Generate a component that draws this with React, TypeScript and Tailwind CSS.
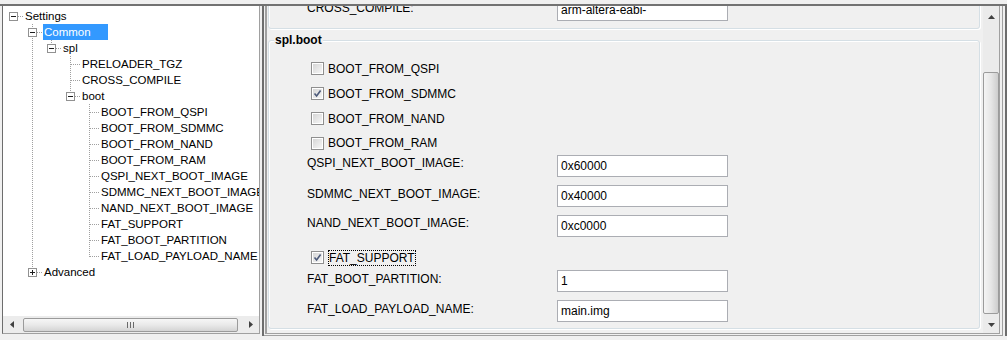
import React from "react";

type CellKind = "blank" | "pipe" | "tee" | "elbow" | "root";
type Box = "minus" | "plus" | undefined;

type TreeRow = { label: string; cells: CellKind[]; box?: Box; selected?: boolean };

const leaf = (label: string, last = false): TreeRow => ({
  label,
  cells: ["blank", "pipe", "blank", "blank", last ? "elbow" : "tee"],
});

const TREE: TreeRow[] = [
  { label: "Settings", cells: ["root"], box: "minus" },
  { label: "Common", cells: ["blank", "tee"], box: "minus", selected: true },
  { label: "spl", cells: ["blank", "pipe", "elbow"], box: "minus" },
  { label: "PRELOADER_TGZ", cells: ["blank", "pipe", "blank", "tee"] },
  { label: "CROSS_COMPILE", cells: ["blank", "pipe", "blank", "tee"] },
  { label: "boot", cells: ["blank", "pipe", "blank", "elbow"], box: "minus" },
  leaf("BOOT_FROM_QSPI"),
  leaf("BOOT_FROM_SDMMC"),
  leaf("BOOT_FROM_NAND"),
  leaf("BOOT_FROM_RAM"),
  leaf("QSPI_NEXT_BOOT_IMAGE"),
  leaf("SDMMC_NEXT_BOOT_IMAGE"),
  leaf("NAND_NEXT_BOOT_IMAGE"),
  leaf("FAT_SUPPORT"),
  leaf("FAT_BOOT_PARTITION"),
  leaf("FAT_LOAD_PAYLOAD_NAME", true),
  { label: "Advanced", cells: ["blank", "elbow"], box: "plus" },
];

const dots = { stroke: "#a0a0a0", strokeDasharray: "1 1", shapeRendering: "crispEdges" as const };

const TreeCell = ({ kind, box }: { kind: CellKind; box?: Box }) => (
  <svg width="19" height="16" className="shrink-0">
    {kind === "pipe" || kind === "tee" ? <line x1="9.5" y1="0" x2="9.5" y2="16" {...dots} /> : null}
    {kind === "elbow" ? <line x1="9.5" y1="0" x2="9.5" y2="9" {...dots} /> : null}
    {kind === "tee" || kind === "elbow" || kind === "root" ? (
      <line x1="10" y1="8.5" x2="19" y2="8.5" {...dots} />
    ) : null}
    {box ? (
      <g shapeRendering="crispEdges">
        <rect x="5.5" y="4.5" width="8" height="8" fill="#ffffff" stroke="#919191" />
        <line x1="7" y1="8.5" x2="12" y2="8.5" stroke="#1e1e1e" />
        {box === "plus" ? <line x1="9.5" y1="6" x2="9.5" y2="11" stroke="#1e1e1e" /> : null}
      </g>
    ) : null}
  </svg>
);

const Arrow = ({ dir }: { dir: "up" | "down" | "left" | "right" }) => {
  const pts = {
    up: "3.5,0 7,4 0,4",
    down: "0,0 7,0 3.5,4",
    left: "4,0 4,7 0,3.5",
    right: "0,0 4,3.5 0,7",
  }[dir];
  const vertical = dir === "up" || dir === "down";
  return (
    <svg width={vertical ? 7 : 4} height={vertical ? 4 : 7}>
      <polygon points={pts} fill="#404040" />
    </svg>
  );
};

const CheckBox = ({ checked }: { checked?: boolean }) => (
  <span className="flex h-[13px] w-[13px] shrink-0 border border-[#8f8f8f] bg-white p-[1px]">
    <span className="flex h-full w-full items-center justify-center bg-gradient-to-br from-[#d6d6d6] to-[#f6f6f6]">
      {checked ? (
        <svg width="9" height="9">
          <path d="M1.5 4.5 L3.6 7 L7.6 1.5" fill="none" stroke="#4c5a7a" strokeWidth="1.6" />
        </svg>
      ) : null}
    </span>
  </span>
);

const CheckRow = ({ label, checked, focused, h = "h-[25px]" }: { label: string; checked?: boolean; focused?: boolean; h?: string }) => (
  <div className={`flex ${h} items-center pl-[42px]`}>
    <CheckBox checked={checked} />
    {focused ? (
      <span className="ml-[4px] border border-dotted border-black leading-[14px]">{label}</span>
    ) : (
      <span className="ml-[4px] leading-[14px]">{label}</span>
    )}
  </div>
);

const FieldRow = ({ label, value, h = "h-[30px]", mt = "mt-[1px]" }: { label: string; value: string; h?: string; mt?: string }) => (
  <div className={`flex ${h} items-start pl-[38px]`}>
    <span className={`w-[250px] shrink-0 leading-[14px] ${mt}`}>{label}</span>
    <div className="flex h-[22px] w-[171px] shrink-0 items-center border border-[#abadb3] bg-white pl-[3px]">{value}</div>
  </div>
);

export default function App() {
  return (
    <div className="h-[340px] w-[1007px] overflow-hidden bg-[#f0f0f0] font-['Liberation_Sans',Arial,sans-serif] text-[12px] text-black">
      <div className="h-[4px]" />
      <div className="h-[2px] bg-[#727272]" />
      <div className="flex h-[330px] items-start">
        {/* tree panel */}
        <div className="ml-[2px] flex h-[328px] w-[258px] flex-col border-b border-l border-r border-b-[#a0a0a0] border-l-[#6d6d6d] border-r-[#a0a0a0]">
          <div className="flex-1 overflow-hidden bg-white pl-[1px] pt-[2px] text-[11.5px]">
            {TREE.map((row) => (
              <div key={row.label} className="flex h-[16px] items-center whitespace-nowrap">
                {row.cells.map((c, i) => (
                  <TreeCell key={i} kind={c} box={i === row.cells.length - 1 ? row.box : undefined} />
                ))}
                {row.selected ? (
                  <span className="ml-[1px] h-[16px] bg-[#3399ff] pl-[1px] pr-[17px] leading-[16px] text-white">{row.label}</span>
                ) : (
                  <span className="ml-[1px] px-[1px] leading-[16px]">{row.label}</span>
                )}
              </div>
            ))}
          </div>
          {/* horizontal scrollbar */}
          <div className="flex h-[17px] items-center bg-[#ececec]">
            <div className="flex h-full w-[17px] items-center justify-center">
              <Arrow dir="left" />
            </div>
            <div className="flex flex-1 items-center pl-[3px]">
              <div className="flex h-[14px] w-[215px] items-center justify-center rounded-[2px] border border-[#9b9b9b] bg-gradient-to-b from-[#f6f6f6] via-[#e9e9e9] to-[#d4d4d4]">
                <svg width="7" height="6">
                  <path d="M0.5 0 V6 M3.5 0 V6 M6.5 0 V6" stroke="#6a6a6a" />
                </svg>
              </div>
            </div>
            <div className="flex h-full w-[17px] items-center justify-center">
              <Arrow dir="right" />
            </div>
          </div>
        </div>

        <div className="w-[2px]" />

        {/* property panel */}
        <div className="h-[330px] w-[745px] border-l-2 border-r-2 border-[#6d6d6d] pr-[2px]">
          <div className="h-full border-b border-r border-[#a0a0a0] pb-[1px] pl-[1px] pr-[2px]">
            <div className="flex h-full border-b border-l-2 border-r border-[#a0a0a0]">
              <div className="flex-1 overflow-hidden">
                <div className="-mt-[30px] ml-[1px] mr-[3px] h-[53px] rounded-[3px] border border-[#d5dfe5] pt-[22px] shadow-[inset_1px_1px_0_#ffffff,1px_1px_0_#ffffff]">
                  <FieldRow label="CROSS_COMPILE:" value="arm-altera-eabi-" mt="mt-[2px]" />
                </div>
                <fieldset className="ml-[1px] mr-[3px] mt-[3px] rounded-[3px] border border-[#d5dfe5] pb-[6px] shadow-[inset_1px_1px_0_#ffffff,1px_1px_0_#ffffff]">
                  <legend className="ml-[5px] bg-[#f0f0f0] px-[1px] font-bold leading-[16px]">spl.boot</legend>
                  <div className="pt-[8px]">
                    <CheckRow label="BOOT_FROM_QSPI" />
                    <CheckRow label="BOOT_FROM_SDMMC" checked />
                    <CheckRow label="BOOT_FROM_NAND" />
                    <CheckRow label="BOOT_FROM_RAM" h="h-[24px]" />
                    <FieldRow label="QSPI_NEXT_BOOT_IMAGE:" value="0x60000" />
                    <FieldRow label="SDMMC_NEXT_BOOT_IMAGE:" value="0x40000" mt="mt-[2px]" />
                    <FieldRow label="NAND_NEXT_BOOT_IMAGE:" value="0xc0000" />
                    <CheckRow label="FAT_SUPPORT" checked focused />
                    <FieldRow label="FAT_BOOT_PARTITION:" value="1" mt="mt-[2px]" />
                    <FieldRow label="FAT_LOAD_PAYLOAD_NAME:" value="main.img" h="h-[22px]" mt="mt-[2px]" />
                  </div>
                </fieldset>
              </div>
              {/* vertical scrollbar */}
              <div className="flex w-[16px] shrink-0 flex-col bg-[#ebebeb]">
                <div className="flex h-[17px] items-center justify-center pt-[4px]">
                  <Arrow dir="up" />
                </div>
                <div className="flex-1 pt-[49px]">
                  <div className="h-[242px] w-full rounded-[2px] border border-[#9b9b9b] bg-gradient-to-r from-[#f4f4f4] via-[#e6e6e6] to-[#cdcdcd]" />
                </div>
                <div className="flex h-[17px] items-center justify-center">
                  <Arrow dir="down" />
                </div>
              </div>
            </div>
          </div>
        </div>
      </div>
    </div>
  );
}
